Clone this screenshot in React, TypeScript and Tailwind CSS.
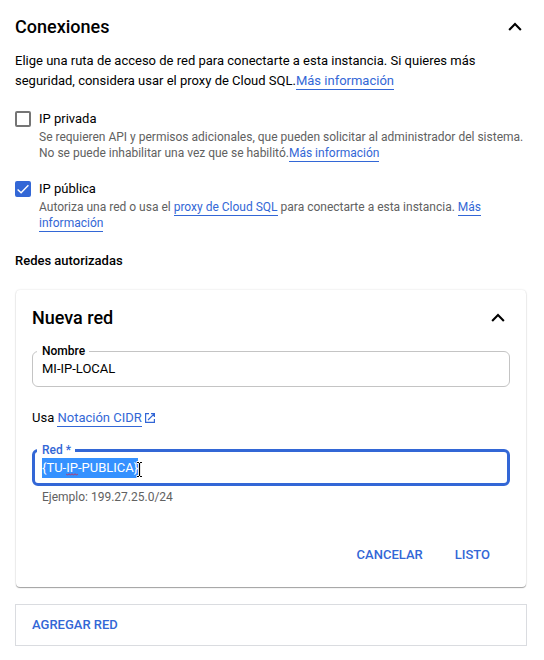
import { useEffect, useId, useRef, useState } from "react";
import type { ReactNode } from "react";

function TextLink({ children }: { children: ReactNode }) {
  return (
    <a href="#" className="border-b border-[#3367d6] pb-px text-[#3367d6]">
      {children}
    </a>
  );
}

function Chevron({ label }: { label: string }) {
  return (
    <button type="button" aria-label={label} className="size-6 shrink-0">
      <svg viewBox="0 0 24 24" className="size-6" fill="black" aria-hidden="true">
        <path d="M12 7.6l-6.6 6.6 1.5 1.5L12 10.6l5.1 5.1 1.5-1.5z" />
      </svg>
    </button>
  );
}

function CheckOption({
  label,
  initial,
  children,
}: {
  label: string;
  initial: boolean;
  children: ReactNode;
}) {
  const id = useId();
  const [checked, setChecked] = useState(initial);
  return (
    <div className="flex gap-2">
      <span className="relative mt-0.5 size-4 shrink-0">
        <input
          id={id}
          type="checkbox"
          checked={checked}
          onChange={(e) => setChecked(e.target.checked)}
          className="block size-4 appearance-none rounded-xs border-2 border-[#757575] checked:border-[#3367d6] checked:bg-[#3367d6]"
        />
        {checked && (
          <svg
            viewBox="0 0 16 16"
            className="pointer-events-none absolute inset-0 size-4"
            fill="none"
            stroke="white"
            strokeWidth="1.4"
            aria-hidden="true"
          >
            <path d="M2.6 8.4l3.5 3.4 7.3-7.6" />
          </svg>
        )}
      </span>
      <div>
        <label htmlFor={id} className="block text-[13px] leading-5">
          {label}
        </label>
        <p className="text-xs leading-4 text-[#616161]">{children}</p>
      </div>
    </div>
  );
}

function TextCursor() {
  return (
    <svg
      viewBox="0 0 9 19"
      className="pointer-events-none absolute top-0.5 left-[93px] h-[19px] w-[9px]"
      fill="none"
      aria-hidden="true"
    >
      <path d="M1.500 2.500h6M4.500 3v14M1.500 16.500h6" stroke="white" strokeWidth="3" />
      <path d="M2 2.500h2M5 2.500h2M4.500 3v13M2 16.500h2M5 16.500h2" stroke="black" strokeWidth="1.2" />
    </svg>
  );
}

function SpellingMark() {
  return (
    <svg
      viewBox="0 0 12 3"
      className="pointer-events-none absolute top-[15px] left-6 h-[3px] w-3"
      fill="none"
      stroke="#e0203c"
      strokeWidth="0.8"
      aria-hidden="true"
    >
      <path d="M0 .7l1.500 1.500L3 .7l1.500 1.500L6 .7l1.500 1.500L9 .7l1.500 1.500L12 .7" />
    </svg>
  );
}

export default function App() {
  const networkRef = useRef<HTMLInputElement>(null);
  const [name, setName] = useState("MI-IP-LOCAL");
  const [network, setNetwork] = useState("{TU-IP-PUBLICA}");

  useEffect(() => {
    networkRef.current?.focus();
    networkRef.current?.select();
  }, []);

  return (
    <main className="bg-white pt-[15px] pr-[17px] pb-3.5 pl-[15px] font-[Roboto,sans-serif] text-[13px] leading-5 text-black">
      <header className="flex items-center justify-between">
        <h1 className="text-lg leading-6 font-medium">Conexiones</h1>
        <Chevron label="Contraer Conexiones" />
      </header>

      <p className="mt-3">
        Elige una ruta de acceso de red para conectarte a esta instancia. Si quieres más
        seguridad, considera usar el proxy de Cloud SQL.
        <TextLink>Más información</TextLink>
      </p>

      <div className="mt-[18px] flex flex-col gap-[18px]">
        <CheckOption label="IP privada" initial={false}>
          Se requieren API y permisos adicionales, que pueden solicitar al administrador del
          sistema. No se puede inhabilitar una vez que se habilitó.
          <TextLink>Más información</TextLink>
        </CheckOption>
        <CheckOption label="IP pública" initial={true}>
          Autoriza una red o usa el <TextLink>proxy de Cloud SQL</TextLink> para conectarte a
          esta instancia. <TextLink>Más información</TextLink>
        </CheckOption>
      </div>

      <h2 className="mt-5 font-medium">Redes autorizadas</h2>

      <section className="mx-px mt-[19px] rounded bg-white px-4 pt-4 pb-3.5 shadow-[0_1px_1px_rgba(0,0,0,0.35),0_0_2px_rgba(0,0,0,0.15)]">
        <header className="flex items-center justify-between">
          <h3 className="text-lg leading-6 font-medium">Nueva red</h3>
          <Chevron label="Contraer Nueva red" />
        </header>

        <fieldset className="mt-[13px] rounded-md border border-[#c4c4c4] px-1">
          <legend className="pr-1 pl-[5px] text-xs leading-4 font-medium">
            <label htmlFor="nombre">Nombre</label>
          </legend>
          <input
            id="nombre"
            value={name}
            onChange={(e) => setName(e.target.value)}
            className="mb-[7px] block h-5 w-full px-[5px] leading-5 outline-none"
          />
        </fieldset>

        <p className="mt-[21px]">
          Usa <TextLink>Notación CIDR</TextLink>
          <svg
            viewBox="0 0 12 12"
            className="ml-0.5 inline size-3 align-[-2px]"
            fill="none"
            stroke="#3367d6"
            strokeWidth="1.2"
            aria-hidden="true"
          >
            <path d="M5 1.600H1.600v8.800h8.800V7M7 1.600h3.400V5M10.400 1.600L4 8" />
          </svg>
        </p>

        <fieldset className="mt-3.5 rounded-md border-3 border-[#3367d6] px-0.5">
          <legend className="pr-1 pl-[5px] text-xs leading-4 font-medium text-[#3367d6]">
            <label htmlFor="red">Red *</label>
          </legend>
          <div className="relative mx-[5px] mb-[5px]">
            <input
              id="red"
              ref={networkRef}
              required
              spellCheck={false}
              value={network}
              onChange={(e) => setNetwork(e.target.value)}
              className="block h-5 w-full leading-5 outline-none selection:bg-[#3390ff]/99 selection:text-white"
            />
            <SpellingMark />
            <TextCursor />
          </div>
        </fieldset>
        <p className="mt-[3px] ml-2.5 text-xs leading-4 text-[#616161]">
          Ejemplo: 199.27.25.0/24
        </p>

        <div className="mt-8 flex justify-end pr-1">
          <button type="button" className="h-9 px-4 font-medium text-[#3367d6]">
            CANCELAR
          </button>
          <button type="button" className="h-9 px-4 font-medium text-[#3367d6]">
            LISTO
          </button>
        </div>
      </section>

      <button
        type="button"
        className="mt-[17px] block h-[42px] w-full border border-[#dadce0] px-4 text-left font-medium text-[#3367d6]"
      >
        AGREGAR RED
      </button>
    </main>
  );
}
